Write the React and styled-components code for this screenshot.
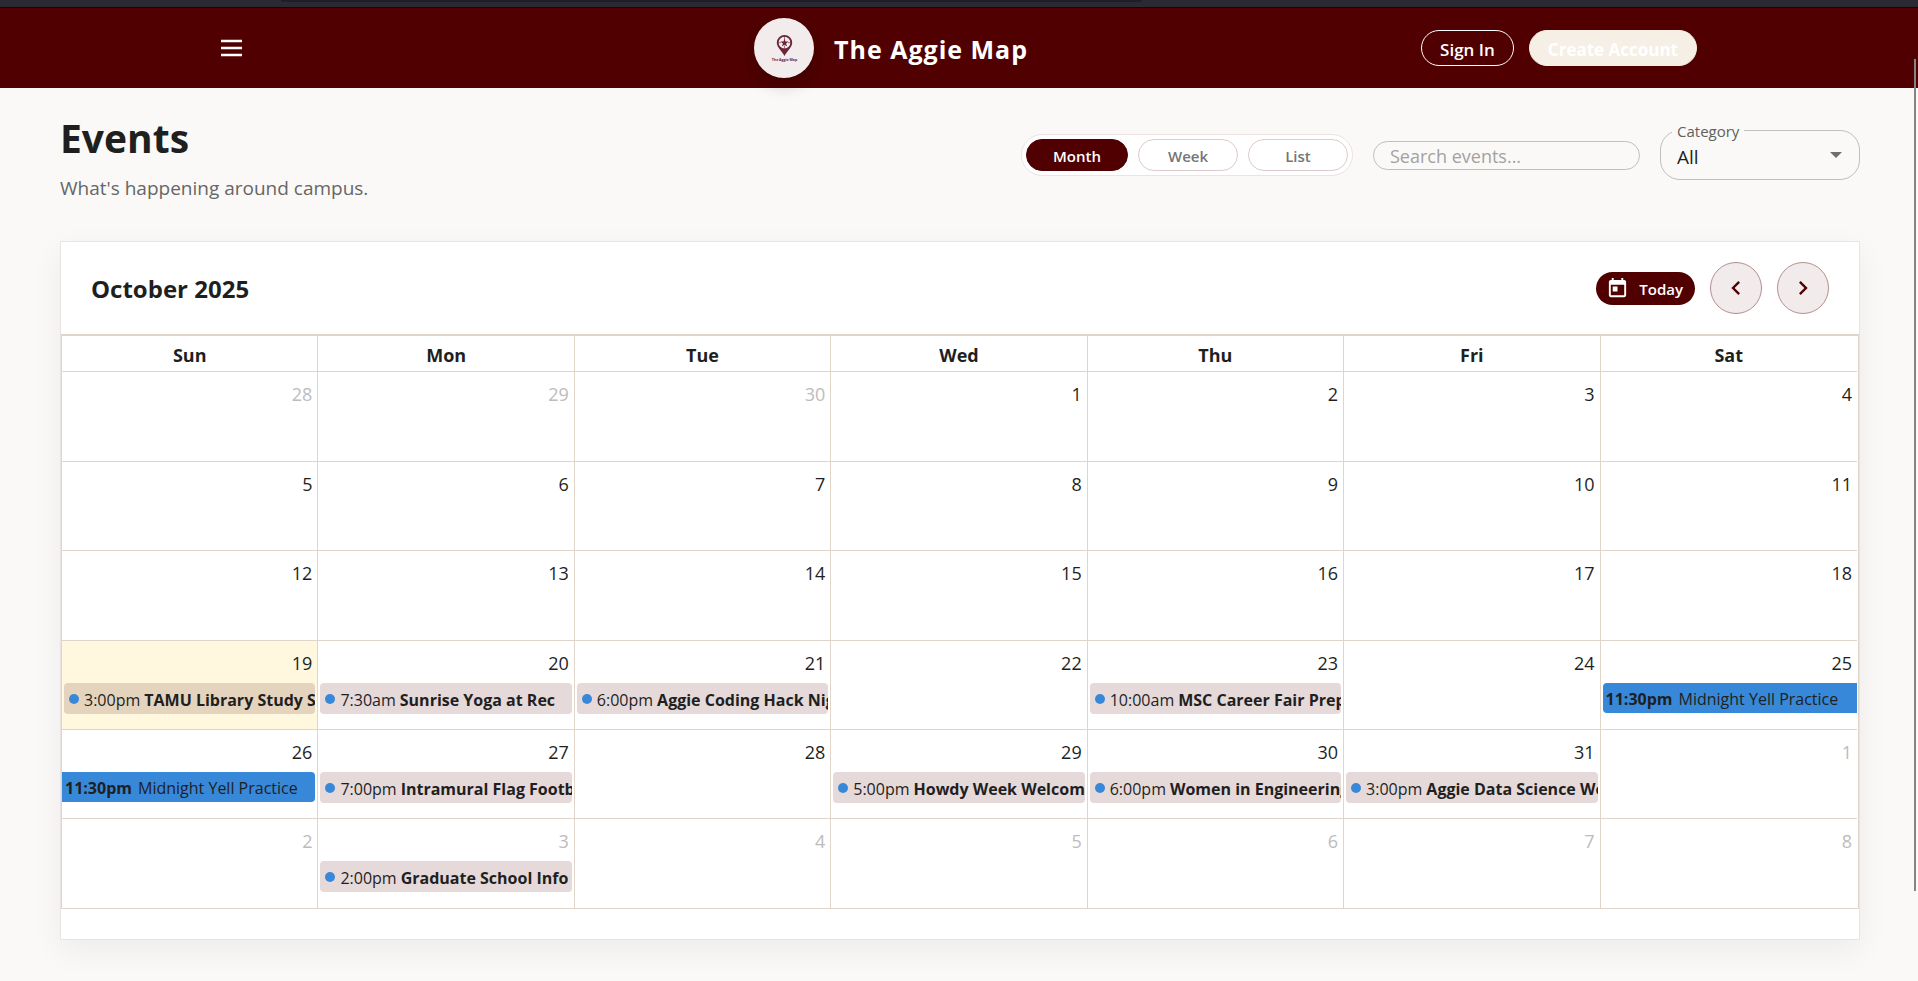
import styled, { createGlobalStyle } from "styled-components";

const GlobalStyle = createGlobalStyle`
  * {
    box-sizing: border-box;
  }

  body {
    margin: 0;
    background-color: #faf9f7;
    color: #1f1f1f;
    font-family: "Open Sans", "Noto Sans", sans-serif;
  }

  button,
  input,
  select {
    font-family: inherit;
  }
`;

const Page = styled.div`
  position: relative;
  min-height: 100vh;
`;

const BrowserStrip = styled.div`
  height: 8px;
  padding: 0 776px 0 281px;
  background-color: #2b2a33;
  border-bottom: 1px solid #0c0c10;
`;

const AddressBar = styled.div`
  height: 2px;
  background-color: #1f1e25;
  border-radius: 0 0 3px 3px;
`;

const ScrollThumb = styled.div`
  position: absolute;
  top: 59px;
  right: 2px;
  width: 2px;
  height: 832px;
  background-color: #858585;
  z-index: 2;
`;

const Header = styled.header`
  height: 80px;
  background-color: #500000;
`;

const HeaderInner = styled.div`
  max-width: 1476px;
  height: 100%;
  margin: 0 auto;
  display: grid;
  grid-template-columns: 1fr auto 1fr;
  align-items: center;
`;

const MenuButton = styled.button`
  justify-self: start;
  display: flex;
  padding: 0;
  border: none;
  background: none;
  color: white;
  cursor: pointer;
`;

const Brand = styled.a`
  display: flex;
  align-items: center;
  gap: 20px;
  margin-right: 136px;
  color: white;
  text-decoration: none;
`;

const LogoCircle = styled.span`
  width: 60px;
  height: 60px;
  display: flex;
  align-items: center;
  justify-content: center;
  border-radius: 50%;
  background-color: #f2ecec;
  box-shadow: 0 8px 16px rgba(0, 0, 0, 0.2);
`;

const BrandName = styled.span`
  padding-top: 2px;
  font-size: 25px;
  font-weight: 700;
  letter-spacing: 1px;
`;

const Actions = styled.div`
  justify-self: end;
  display: flex;
  gap: 15px;
`;

const AuthButton = styled.button`
  height: 36px;
  padding: 2px 18px 0;
  border: 1px solid ${(props) => (props.$filled ? "#f6efe6" : "white")};
  border-radius: 18px;
  background-color: ${(props) => (props.$filled ? "#f6efe6" : "transparent")};
  color: white;
  font-size: 17px;
  font-weight: ${(props) => (props.$filled ? 700 : 600)};
  cursor: pointer;
`;

const Main = styled.main`
  padding: 20px 58px 41px 60px;
`;

const Toolbar = styled.div`
  display: flex;
  justify-content: space-between;
  align-items: flex-start;
  margin-bottom: 37px;
`;

const Title = styled.h1`
  margin: 0;
  font-size: 39px;
  line-height: 60px;
  font-weight: 700;
`;

const Subtitle = styled.p`
  margin: 5px 0 0;
  font-size: 19px;
  line-height: 31px;
  color: #666;
`;

const Filters = styled.div`
  display: flex;
  align-items: center;
  gap: 20px;
  margin-top: 22px;
`;

const Segmented = styled.div`
  display: flex;
  gap: 10px;
  padding: 4px;
  border: 1px solid #eee2e2;
  border-radius: 21px;
  background-color: white;
`;

const SegmentButton = styled.button`
  width: ${(props) => (props.$active ? "102px" : "100px")};
  height: 32px;
  padding: 2px 0 0;
  border: 1px solid ${(props) => (props.$active ? "#500000" : "#dccccc")};
  border-radius: 16px;
  background-color: ${(props) => (props.$active ? "#500000" : "white")};
  color: ${(props) => (props.$active ? "white" : "#757575")};
  font-size: 15px;
  font-weight: 600;
  cursor: pointer;
`;

const SearchInput = styled.input`
  width: 267px;
  height: 29px;
  padding: 2px 16px 0;
  border: 1px solid #c0bfbe;
  border-radius: 15px;
  background-color: transparent;
  font-size: 18px;

  &::placeholder {
    color: #a3a2a1;
  }
`;

const Field = styled.div`
  position: relative;
  width: 200px;
`;

const FieldLabel = styled.label`
  position: absolute;
  top: -8px;
  left: 12px;
  padding: 0 5px;
  background-color: #faf9f7;
  color: #606060;
  font-size: 15px;
  line-height: 18px;
`;

const Select = styled.select`
  width: 100%;
  height: 50px;
  padding: 4px 16px 0;
  border: 1px solid #c0bfbe;
  border-radius: 20px;
  background-color: transparent;
  color: #1f1f1f;
  font-size: 19px;
  appearance: none;
`;

const SelectArrow = styled.svg`
  position: absolute;
  top: 22px;
  right: 18px;
  pointer-events: none;
`;

const Card = styled.section`
  padding-bottom: 30px;
  border: 1px solid #ebe3e3;
  background-color: white;
  box-shadow: 0 10px 30px rgba(0, 0, 0, 0.06);
`;

const CardHeader = styled.div`
  display: flex;
  justify-content: space-between;
  align-items: center;
  padding: 20px 30px;
`;

const MonthTitle = styled.h2`
  margin: 0;
  padding-top: 2px;
  font-size: 24px;
  line-height: 36px;
  font-weight: 700;
`;

const Nav = styled.div`
  display: flex;
  align-items: center;
  gap: 15px;
`;

const TodayButton = styled.button`
  display: flex;
  align-items: center;
  gap: 10px;
  height: 33px;
  padding: 0 12px 0 10px;
  border: none;
  border-radius: 17px;
  background-color: #500000;
  color: white;
  font-size: 15px;
  font-weight: 600;
  cursor: pointer;

  span {
    padding-top: 2px;
  }
`;

const RoundButton = styled.button`
  width: 52px;
  height: 52px;
  display: flex;
  align-items: center;
  justify-content: center;
  padding: 0;
  border: 1px solid #b58f8f;
  border-radius: 50%;
  background-color: #f2ebeb;
  color: #500000;
  cursor: pointer;
`;

const Calendar = styled.table`
  width: 100%;
  padding-right: 1px;
  border-collapse: separate;
  border-spacing: 0;
  table-layout: fixed;
  border: 1px solid #e1d5c9;
  border-top-width: 2px;
`;

const DayName = styled.th`
  height: 36px;
  padding: 2px 0 0;
  border-bottom: 1px solid #e1d5c9;
  border-right: 1px solid #e1d5c9;
  font-size: 18px;
  line-height: 26px;
  font-weight: 700;

  &:last-child {
    border-right: none;
  }
`;

const DayCell = styled.td`
  height: 89px;
  padding: 0;
  vertical-align: top;
  border-right: 1px solid #e1d5c9;
  border-bottom: 1px solid #e1d5c9;
  background-color: ${(props) => (props.$today ? "#fff8df" : "white")};

  &:last-child {
    border-right: none;
  }

  tr:nth-child(-2n + 3) > & {
    height: 90px;
  }

  tr:last-child > & {
    border-bottom: none;
  }
`;

const DayNumber = styled.div`
  padding: 9px 5px 7px 0;
  color: ${(props) => (props.$muted ? "#bcbcbc" : "#1f1f1f")};
  font-size: 18px;
  line-height: 26px;
  text-align: right;
`;

const DotEvent = styled.a`
  display: flex;
  align-items: center;
  gap: 4px;
  height: 31px;
  margin: 0 2px;
  padding-left: 5px;
  overflow: hidden;
  border-radius: 4px;
  background-color: ${(props) => (props.$today ? "#e5d4bd" : "#e5d9d9")};
  color: #1f1f1f;
  font-size: 16px;
  line-height: 28px;
  text-decoration: none;
  white-space: nowrap;

  span,
  b {
    padding-top: 2px;
  }
`;

const Dot = styled.i`
  flex: none;
  width: 10px;
  height: 10px;
  margin-right: 1px;
  border-radius: 50%;
  background-color: #3788d8;
`;

const BlockEvent = styled.a`
  display: flex;
  align-items: center;
  gap: 6px;
  height: 30px;
  margin: ${(props) => (props.$end ? "0 2px 0 0" : "0 0 0 2px")};
  padding: 2px 0 0 3px;
  border-radius: ${(props) => (props.$end ? "0 4px 4px 0" : "4px 0 0 4px")};
  overflow: hidden;
  background-color: #3788d8;
  color: #1f1f1f;
  font-size: 16px;
  text-decoration: none;
  white-space: nowrap;
`;

const dayNames = ["Sun", "Mon", "Tue", "Wed", "Thu", "Fri", "Sat"];

const weeks = [
  [28, 29, 30, 1, 2, 3, 4],
  [5, 6, 7, 8, 9, 10, 11],
  [12, 13, 14, 15, 16, 17, 18],
  [19, 20, 21, 22, 23, 24, 25],
  [26, 27, 28, 29, 30, 31, 1],
  [2, 3, 4, 5, 6, 7, 8],
];

// keyed by "week-day"
const events = {
  "3-0": { time: "3:00pm", title: "TAMU Library Study Session" },
  "3-1": { time: "7:30am", title: "Sunrise Yoga at Rec" },
  "3-2": { time: "6:00pm", title: "Aggie Coding Hack Night" },
  "3-4": { time: "10:00am", title: "MSC Career Fair Prep" },
  "3-6": { time: "11:30pm", title: "Midnight Yell Practice", block: true },
  "4-0": { time: "11:30pm", title: "Midnight Yell Practice", block: true, end: true },
  "4-1": { time: "7:00pm", title: "Intramural Flag Football" },
  "4-3": { time: "5:00pm", title: "Howdy Week Welcome" },
  "4-4": { time: "6:00pm", title: "Women in Engineering" },
  "4-5": { time: "3:00pm", title: "Aggie Data Science Workshop" },
  "5-1": { time: "2:00pm", title: "Graduate School Info" },
};

const Logo = () => (
  <svg width="60" height="60" viewBox="0 0 60 60" aria-hidden="true">
    <path
      fill="#6b2438"
      fillRule="evenodd"
      d="M30.500 17a7.700 7.700 0 0 1 7.700 7.700c0 4.500-4.200 7-7.700 13.300c-3.500-6.300-7.700-8.800-7.700-13.300a7.700 7.700 0 0 1 7.700-7.700zm0 1.800a5.900 5.900 0 1 0 0 11.800a5.900 5.900 0 0 0 0-11.800z"
    />
    <path stroke="#6b2438" strokeWidth="0.600" d="M30.500 18v4M30.500 27.500v4M24 24.700h3M34 24.700h3" />
    <path
      fill="#6b2438"
      d="M30.500 20.700l1 2.900h3.100l-2.500 1.900 1 3-2.600-1.800-2.600 1.800 1-3-2.500-1.900h3.100z"
    />
    <text
      x="30.500"
      y="43"
      textAnchor="middle"
      fontFamily="Open Sans, sans-serif"
      fontSize="3.500"
      fontWeight="700"
      fill="#6b2438"
    >
      The Aggie Map
    </text>
  </svg>
);

const EventItem = ({ event, today }) => {
  if (event.block) {
    return (
      <BlockEvent href="#" $end={event.end}>
        <b>{event.time}</b>
        <span>{event.title}</span>
      </BlockEvent>
    );
  }

  return (
    <DotEvent href="#" $today={today}>
      <Dot />
      <span>{event.time}</span>
      <b>{event.title}</b>
    </DotEvent>
  );
};

const App = () => {
  const isMuted = (week, date) =>
    (week === 0 && date > 20) || (week > 3 && date < 10);

  return (
    <Page>
      <GlobalStyle />
      <BrowserStrip>
        <AddressBar />
      </BrowserStrip>
      <ScrollThumb />
      <Header>
        <HeaderInner>
          <MenuButton aria-label="Open menu">
            <svg width="21" height="18" viewBox="0 0 21 18">
              <path stroke="currentColor" strokeWidth="2.400" d="M0 2h21M0 9h21M0 16h21" />
            </svg>
          </MenuButton>
          <Brand href="#">
            <LogoCircle>
              <Logo />
            </LogoCircle>
            <BrandName>The Aggie Map</BrandName>
          </Brand>
          <Actions>
            <AuthButton>Sign In</AuthButton>
            <AuthButton $filled>Create Account</AuthButton>
          </Actions>
        </HeaderInner>
      </Header>
      <Main>
        <Toolbar>
          <div>
            <Title>Events</Title>
            <Subtitle>What's happening around campus.</Subtitle>
          </div>
          <Filters>
            <Segmented>
              <SegmentButton $active>Month</SegmentButton>
              <SegmentButton>Week</SegmentButton>
              <SegmentButton>List</SegmentButton>
            </Segmented>
            <SearchInput aria-label="Search events" placeholder="Search events..." />
            <Field>
              <FieldLabel htmlFor="category">Category</FieldLabel>
              <Select id="category" defaultValue="All">
                <option>All</option>
              </Select>
              <SelectArrow width="12" height="6" viewBox="0 0 12 6">
                <path fill="#6f6f6f" d="M0 0h12L6 6z" />
              </SelectArrow>
            </Field>
          </Filters>
        </Toolbar>
        <Card>
          <CardHeader>
            <MonthTitle>October 2025</MonthTitle>
            <Nav>
              <TodayButton>
                <svg width="23" height="23" viewBox="0 0 24 24" fill="currentColor">
                  <path d="M19 3h-1V1h-2v2H8V1H6v2H5c-1.110 0-1.990.9-1.990 2L3 19c0 1.100.890 2 2 2h14c1.100 0 2-.9 2-2V5c0-1.100-.9-2-2-2zm0 16H5V8h14v11zM7 10h5v5H7z" />
                </svg>
                <span>Today</span>
              </TodayButton>
              <RoundButton aria-label="Previous month">
                <svg width="28" height="28" viewBox="0 0 24 24" fill="currentColor">
                  <path d="M15.410 7.410L14 6l-6 6 6 6 1.410-1.410L10.830 12z" />
                </svg>
              </RoundButton>
              <RoundButton aria-label="Next month">
                <svg width="28" height="28" viewBox="0 0 24 24" fill="currentColor">
                  <path d="M10 6L8.590 7.410 13.170 12l-4.580 4.590L10 18l6-6z" />
                </svg>
              </RoundButton>
            </Nav>
          </CardHeader>
          <Calendar>
            <thead>
              <tr>
                {dayNames.map((name) => (
                  <DayName key={name} scope="col">{name}</DayName>
                ))}
              </tr>
            </thead>
            <tbody>
              {weeks.map((week, w) => (
                <tr key={w}>
                  {week.map((date, d) => {
                    const event = events[`${w}-${d}`];
                    const today = w === 3 && d === 0;
                    return (
                      <DayCell key={d} $today={today}>
                        <DayNumber $muted={isMuted(w, date)}>{date}</DayNumber>
                        {event && <EventItem event={event} today={today} />}
                      </DayCell>
                    );
                  })}
                </tr>
              ))}
            </tbody>
          </Calendar>
        </Card>
      </Main>
    </Page>
  );
};

export default App;
